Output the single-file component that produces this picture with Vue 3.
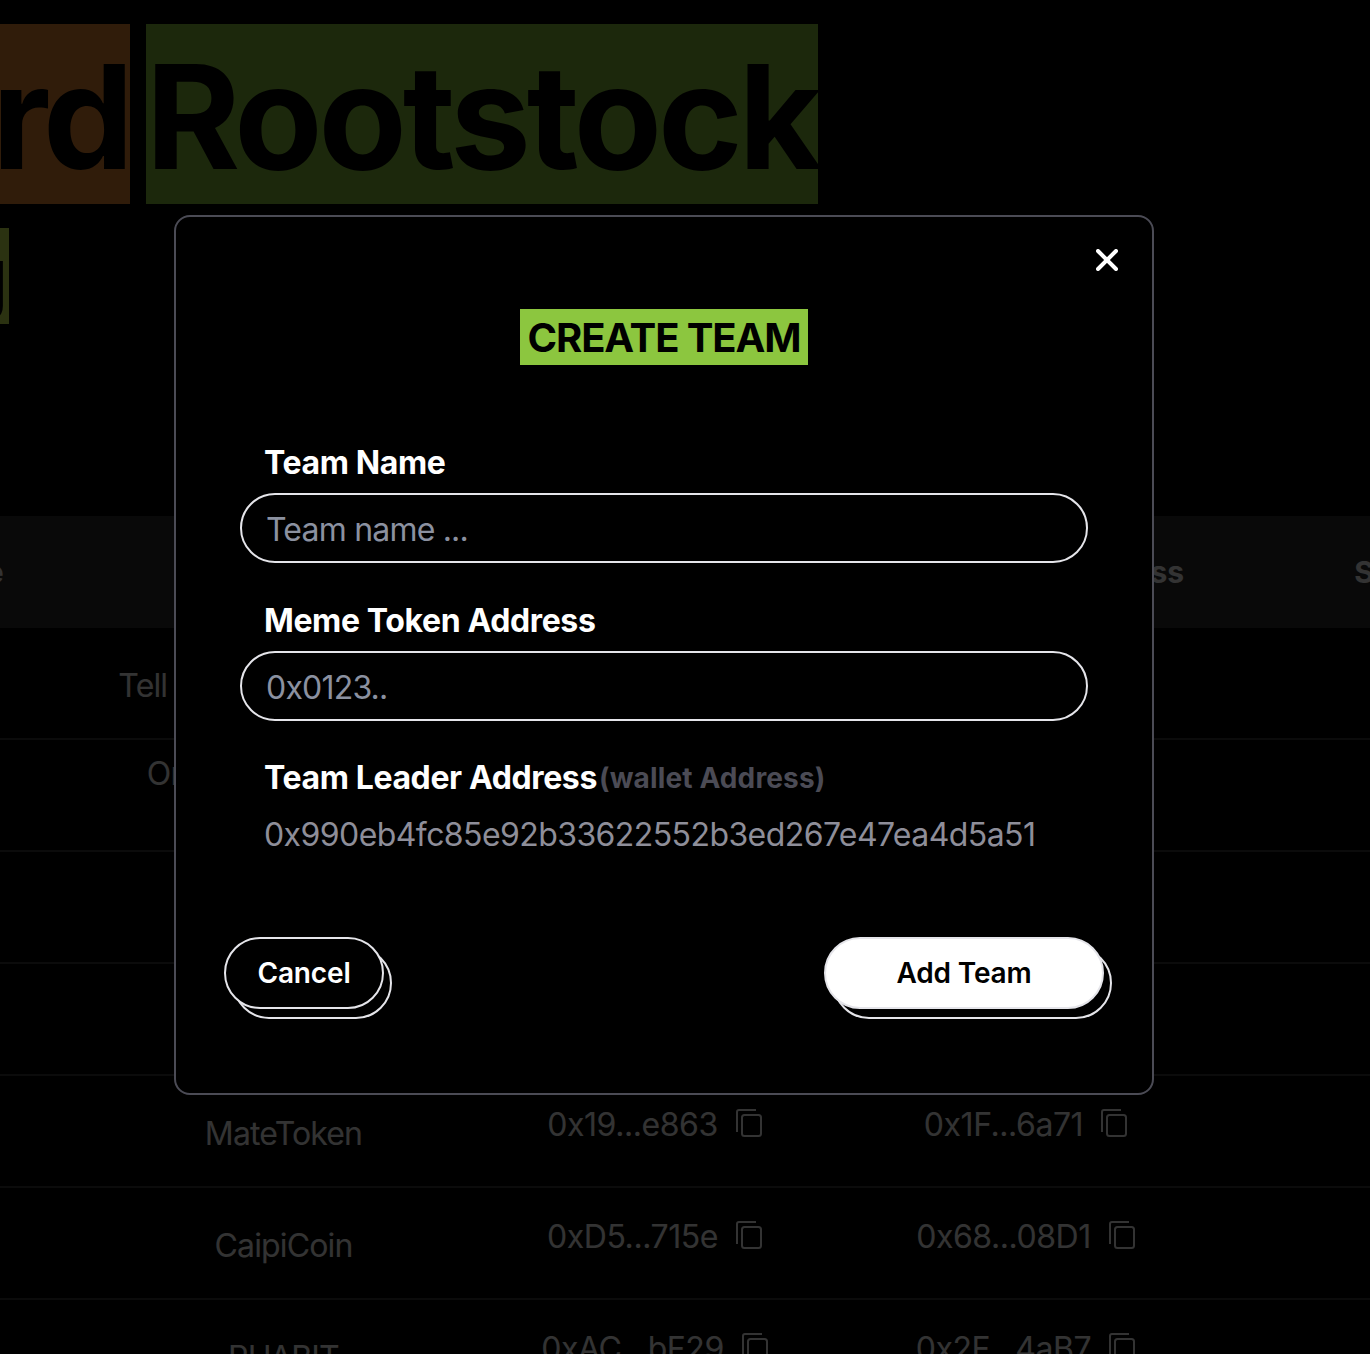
<script setup>
const rows = [
  { name: 'Tell me more please ok', token: '0x72...c0A4', leader: '0x4B...91d2' },
  { name: 'OnlyMemes Squad\nToken', token: '0x3E...77aB', leader: '0x8C...20fE' },
  { name: 'DogeRoot', token: '0xB1...4d19', leader: '0x06...e5C3' },
  { name: 'RootCat', token: '0x5A...ff02', leader: '0xD7...13b8' },
  { name: 'MateToken', token: '0x19...e863', leader: '0x1F...6a71' },
  { name: 'CaipiCoin', token: '0xD5...715e', leader: '0x68...08D1' },
  { name: 'PUABIT', token: '0xAC...bF29', leader: '0x2F...4aB7' }
]
</script>

<template>
  <div class="page">
    <div class="behind">
      <div class="headline">
        <span class="tag tag-orange">Leaderboard</span>
        <span class="tag tag-green">Rootstock</span>
      </div>
      <div class="sub-row">
        <span class="sub-tag">g</span>
      </div>
      <div class="table">
        <div class="row head">
          <div class="cell">Team Profile</div>
          <div class="cell">Meme Token</div>
          <div class="cell">Token Address</div>
          <div class="cell">Team Leader Address</div>
          <div class="cell">Score</div>
        </div>
        <div v-for="r in rows" :key="r.name" class="row">
          <div class="cell"></div>
          <div class="cell name">{{ r.name }}</div>
          <div class="cell addr">
            <span>{{ r.token }}</span>
            <svg class="copy" viewBox="0 0 26 28" fill="none" stroke="currentColor" stroke-width="2">
              <path d="M1 23V3a2 2 0 0 1 2-2h17" />
              <rect x="6" y="6" width="19" height="21" rx="2.5" />
            </svg>
          </div>
          <div class="cell addr">
            <span>{{ r.leader }}</span>
            <svg class="copy" viewBox="0 0 26 28" fill="none" stroke="currentColor" stroke-width="2">
              <path d="M1 23V3a2 2 0 0 1 2-2h17" />
              <rect x="6" y="6" width="19" height="21" rx="2.5" />
            </svg>
          </div>
          <div class="cell"></div>
        </div>
      </div>
    </div>

    <div class="overlay">
      <div class="modal">
        <button class="close" aria-label="Close">
          <svg width="22" height="22" viewBox="0 0 22 22" fill="none" stroke="#fff" stroke-width="4" stroke-linecap="round">
            <path d="M2 2l18 18M20 2L2 20" />
          </svg>
        </button>
        <div class="title-wrap"><h2 class="title">CREATE TEAM</h2></div>
        <div class="form">
          <label class="label">Team Name</label>
          <input class="input" placeholder="Team name ..." />
          <label class="label second">Meme Token Address</label>
          <input class="input" placeholder="0x0123.." />
          <div class="label third">Team Leader Address<span class="hint">(wallet Address)</span></div>
          <div class="wallet">0x990eb4fc85e92b33622552b3ed267e47ea4d5a51</div>
        </div>
        <div class="actions">
          <div class="btn-wrap">
            <span class="btn-shadow"></span>
            <button class="btn cancel">Cancel</button>
          </div>
          <div class="btn-wrap">
            <span class="btn-shadow"></span>
            <button class="btn add">Add Team</button>
          </div>
        </div>
      </div>
    </div>
  </div>
</template>

<style>
html, body { margin: 0; background: #000; }
</style>

<style scoped>
.page {
  position: relative;
  width: 1370px;
  height: 1354px;
  overflow: hidden;
  background: #000;
  font-family: Inter, "Liberation Sans", sans-serif;
}
.behind { padding-top: 24px; }
.headline {
  display: flex;
  justify-content: flex-end;
  gap: 16px;
  width: 818px;
  height: 180px;
}
.tag {
  flex: none;
  display: block;
  height: 180px;
  overflow: hidden;
  font-size: 144px;
  line-height: 186px;
  font-weight: 700;
  letter-spacing: -4.15px;
  color: #000;
  white-space: nowrap;
}
.tag-orange { background: #f08c32; }
.tag-green { background: #8cc63f; }
.sub-row {
  display: flex;
  justify-content: flex-end;
  width: 9px;
  height: 96px;
  margin-top: 24px;
  overflow: hidden;
}
.sub-tag {
  flex: none;
  background: #d7fa55;
  color: #000;
  padding-right: 0;
  font-size: 80px;
  line-height: 96px;
  font-weight: 400;
}
.table {
  margin-top: 192px;
  margin-left: -273px;
  width: 1855px;
}
.row {
  display: grid;
  grid-template-columns: repeat(5, 371px);
  height: 112px;
  box-sizing: border-box;
  border-bottom: 2px solid #3a3a3a;
  color: #fff;
}
.head {
  border-bottom: 0;
  background: #2e2e2e;
  font-size: 30px;
  font-weight: 700;
  letter-spacing: -0.1px;
}
.cell {
  display: flex;
  align-items: center;
  justify-content: center;
  text-align: center;
  white-space: nowrap;
}
.name {
  font-size: 32px;
  line-height: 48px;
  letter-spacing: -0.85px;
  padding-top: 5px;
  white-space: pre-line;
}
.addr {
  font-size: 32px;
  letter-spacing: -0.45px;
  gap: 18px;
  padding-bottom: 14px;
}
.copy {
  flex: none;
  width: 26px;
  height: 28px;
  margin-bottom: 2px;
}
.overlay {
  position: absolute;
  inset: 0;
  background: rgba(0, 0, 0, 0.8);
  padding: 215px 0 0 174px;
  box-sizing: border-box;
}
.modal {
  position: relative;
  width: 980px;
  height: 880px;
  box-sizing: border-box;
  background: #000;
  border: 2px solid #4b4b55;
  border-radius: 16px;
  padding: 92px 48px 0;
  color: #fff;
}
.close {
  position: absolute;
  top: 32px;
  right: 34px;
  width: 22px;
  height: 22px;
  padding: 0;
  border: 0;
  background: none;
  display: block;
}
.close svg { display: block; }
.title-wrap { display: flex; justify-content: center; }
.title {
  margin: 0;
  height: 56px;
  padding: 0 8px;
  background: #8cc63f;
  color: #000;
  font-size: 40px;
  line-height: 58px;
  font-weight: 700;
  letter-spacing: -1.1px;
}
.form {
  display: flex;
  flex-direction: column;
  margin: 78px 0 0 16px;
  width: 848px;
}
.label {
  padding-left: 24px;
  font-size: 32px;
  line-height: 40px;
  font-weight: 700;
  letter-spacing: -0.38px;
  margin-bottom: 10px;
}
.second { margin-top: 38px; }
.third {
  display: flex;
  align-items: center;
  height: 40px;
  margin: 37px 0 0;
}
.hint {
  margin-left: 2px;
  color: #4b4b55;
  font-size: 28px;
  letter-spacing: 0.15px;
}
.input {
  width: 848px;
  height: 70px;
  box-sizing: border-box;
  border: 2px solid #e5e5ea;
  border-radius: 35px;
  background: #000;
  color: #fff;
  padding: 2px 24px 0;
  font-family: inherit;
  font-size: 32px;
  letter-spacing: -0.8px;
  outline: none;
}
.input::placeholder { color: #8b91a0; opacity: 1; }
.wallet {
  margin-top: 17px;
  padding-left: 24px;
  font-size: 32px;
  line-height: 40px;
  letter-spacing: -0.58px;
  color: #8e8e99;
  white-space: nowrap;
}
.actions {
  display: flex;
  justify-content: space-between;
  margin-top: 82px;
}
.btn-wrap { position: relative; height: 72px; }
.btn-shadow {
  position: absolute;
  left: 9px;
  top: 10px;
  right: -8px;
  bottom: -10px;
  border: 2px solid #e5e5ea;
  border-radius: 36px;
  background: #000;
  box-sizing: border-box;
}
.btn {
  position: relative;
  display: block;
  height: 72px;
  box-sizing: border-box;
  border: 2px solid #e5e5ea;
  border-radius: 36px;
  font-family: inherit;
  font-size: 28px;
  font-weight: 600;
  letter-spacing: -0.15px;
}
.cancel { width: 160px; background: #000; color: #fff; }
.add { width: 280px; background: #fff; color: #000; }
</style>
